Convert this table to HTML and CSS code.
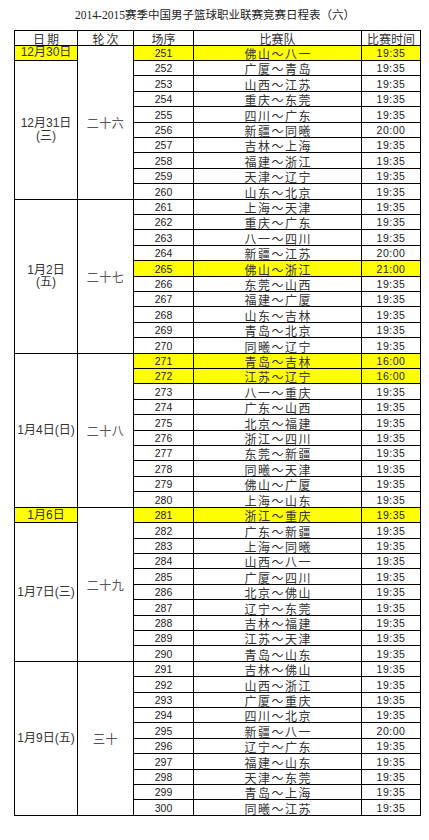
FILE: index.html
```html
<!DOCTYPE html>
<html lang="zh-CN">
<head>
<meta charset="utf-8">
<title>2014-2015赛季中国男子篮球职业联赛竞赛日程表（六）</title>
<link rel="stylesheet" href="styles.css">
</head>
<body>
<h1 class="title">2014-2015赛季中国男子篮球职业联赛竞赛日程表（六）</h1>
<table class="sched">
<colgroup><col class="c-date"><col class="c-round"><col class="c-no"><col class="c-team"><col class="c-time"></colgroup>
<thead>
<tr class="head"><th class="wide">日期</th><th class="wide">轮次</th><th>场序</th><th>比赛队</th><th>比赛时间</th></tr>
</thead>
<tbody>
<tr><td class="date hl">12月30日</td><td class="round" rowspan="10">二十六</td><td class="no hl">251</td><td class="team hl">佛山～八一</td><td class="time hl">19:35</td></tr>
<tr><td class="date" rowspan="9">12月31日<br>(三)</td><td class="no">252</td><td class="team">广厦～青岛</td><td class="time">19:35</td></tr>
<tr><td class="no">253</td><td class="team">山西～江苏</td><td class="time">19:35</td></tr>
<tr><td class="no">254</td><td class="team">重庆～东莞</td><td class="time">19:35</td></tr>
<tr><td class="no">255</td><td class="team">四川～广东</td><td class="time">19:35</td></tr>
<tr><td class="no">256</td><td class="team">新疆～同曦</td><td class="time">20:00</td></tr>
<tr><td class="no">257</td><td class="team">吉林～上海</td><td class="time">19:35</td></tr>
<tr><td class="no">258</td><td class="team">福建～浙江</td><td class="time">19:35</td></tr>
<tr><td class="no">259</td><td class="team">天津～辽宁</td><td class="time">19:35</td></tr>
<tr><td class="no">260</td><td class="team">山东～北京</td><td class="time">19:35</td></tr>

<tr><td class="date" rowspan="10">1月2日<br>(五)</td><td class="round" rowspan="10">二十七</td><td class="no">261</td><td class="team">上海～天津</td><td class="time">19:35</td></tr>
<tr><td class="no">262</td><td class="team">重庆～广东</td><td class="time">19:35</td></tr>
<tr><td class="no">263</td><td class="team">八一～四川</td><td class="time">19:35</td></tr>
<tr><td class="no">264</td><td class="team">新疆～江苏</td><td class="time">20:00</td></tr>
<tr><td class="no hl">265</td><td class="team hl">佛山～浙江</td><td class="time hl">21:00</td></tr>
<tr><td class="no">266</td><td class="team">东莞～山西</td><td class="time">19:35</td></tr>
<tr><td class="no">267</td><td class="team">福建～广厦</td><td class="time">19:35</td></tr>
<tr><td class="no">268</td><td class="team">山东～吉林</td><td class="time">19:35</td></tr>
<tr><td class="no">269</td><td class="team">青岛～北京</td><td class="time">19:35</td></tr>
<tr><td class="no">270</td><td class="team">同曦～辽宁</td><td class="time">19:35</td></tr>

<tr><td class="date" rowspan="10">1月4日(日)</td><td class="round" rowspan="10">二十八</td><td class="no hl">271</td><td class="team hl">青岛～吉林</td><td class="time hl">16:00</td></tr>
<tr><td class="no hl">272</td><td class="team hl">江苏～辽宁</td><td class="time hl">16:00</td></tr>
<tr><td class="no">273</td><td class="team">八一～重庆</td><td class="time">19:35</td></tr>
<tr><td class="no">274</td><td class="team">广东～山西</td><td class="time">19:35</td></tr>
<tr><td class="no">275</td><td class="team">北京～福建</td><td class="time">19:35</td></tr>
<tr><td class="no">276</td><td class="team">浙江～四川</td><td class="time">19:35</td></tr>
<tr><td class="no">277</td><td class="team">东莞～新疆</td><td class="time">19:35</td></tr>
<tr><td class="no">278</td><td class="team">同曦～天津</td><td class="time">19:35</td></tr>
<tr><td class="no">279</td><td class="team">佛山～广厦</td><td class="time">19:35</td></tr>
<tr><td class="no">280</td><td class="team">上海～山东</td><td class="time">19:35</td></tr>

<tr><td class="date hl">1月6日</td><td class="round" rowspan="10">二十九</td><td class="no hl">281</td><td class="team hl">浙江～重庆</td><td class="time hl">19:35</td></tr>
<tr><td class="date" rowspan="9">1月7日(三)</td><td class="no">282</td><td class="team">广东～新疆</td><td class="time">19:35</td></tr>
<tr><td class="no">283</td><td class="team">上海～同曦</td><td class="time">19:35</td></tr>
<tr><td class="no">284</td><td class="team">山西～八一</td><td class="time">19:35</td></tr>
<tr><td class="no">285</td><td class="team">广厦～四川</td><td class="time">19:35</td></tr>
<tr><td class="no">286</td><td class="team">北京～佛山</td><td class="time">19:35</td></tr>
<tr><td class="no">287</td><td class="team">辽宁～东莞</td><td class="time">19:35</td></tr>
<tr><td class="no">288</td><td class="team">吉林～福建</td><td class="time">19:35</td></tr>
<tr><td class="no">289</td><td class="team">江苏～天津</td><td class="time">19:35</td></tr>
<tr><td class="no">290</td><td class="team">青岛～山东</td><td class="time">19:35</td></tr>

<tr><td class="date" rowspan="10">1月9日(五)</td><td class="round" rowspan="10">三十</td><td class="no">291</td><td class="team">吉林～佛山</td><td class="time">19:35</td></tr>
<tr><td class="no">292</td><td class="team">山西～浙江</td><td class="time">19:35</td></tr>
<tr><td class="no">293</td><td class="team">广厦～重庆</td><td class="time">19:35</td></tr>
<tr><td class="no">294</td><td class="team">四川～北京</td><td class="time">19:35</td></tr>
<tr><td class="no">295</td><td class="team">新疆～八一</td><td class="time">20:00</td></tr>
<tr><td class="no">296</td><td class="team">辽宁～广东</td><td class="time">19:35</td></tr>
<tr><td class="no">297</td><td class="team">福建～山东</td><td class="time">19:35</td></tr>
<tr><td class="no">298</td><td class="team">天津～东莞</td><td class="time">19:35</td></tr>
<tr><td class="no">299</td><td class="team">青岛～上海</td><td class="time">19:35</td></tr>
<tr><td class="no">300</td><td class="team">同曦～江苏</td><td class="time">19:35</td></tr>
</tbody>
</table>
</body>
</html>
```

FILE: styles.css
```css
html, body {
  margin: 0;
  padding: 0;
  background: #ffffff;
}

body {
  font-family: "Liberation Sans", "Noto Sans CJK SC", sans-serif;
  color: #222;
}

.title {
  margin: 0;
  padding-top: 8px;
  padding-left: 1px;
  height: 29.5px;
  box-sizing: border-box;
  text-align: center;
  font-family: "Liberation Serif", "Noto Sans CJK SC", serif;
  font-size: 11.5px;
  line-height: 14px;
  font-weight: normal;
  color: #222;
}

.sched {
  margin-left: 14px;
  border-collapse: collapse;
  table-layout: fixed;
  width: 407px;
}

.c-date { width: 63px; }
.c-round { width: 56px; }
.c-no { width: 60px; }
.c-team { width: 168px; }
.c-time { width: 59px; }

.sched th,
.sched td {
  border: 1px solid #000;
  padding: 0;
  text-align: center;
  white-space: nowrap;
}

.head th {
  height: 14px;
  font-family: "Noto Sans CJK SC", sans-serif;
  font-weight: normal;
  font-size: 12px;
  line-height: 13px;
  vertical-align: bottom;
  color: #333;
}

.head th.wide {
  letter-spacing: 2px;
  padding-left: 2px;
}

.sched tbody tr {
  height: 15.42px;
}

.sched td {
  vertical-align: bottom;
  font-size: 12px;
  line-height: 13px;
}

.sched td.no {
  font-family: "Liberation Sans", sans-serif;
  font-size: 10.5px;
  color: #222;
}

.sched td.time {
  font-family: "Liberation Sans", sans-serif;
  font-size: 10.5px;
  letter-spacing: 0.5px;
  color: #222;
}

.sched td.team {
  font-family: "Noto Sans CJK SC", sans-serif;
  font-size: 12px;
  letter-spacing: 1.5px;
  padding-left: 1.5px;
  color: #333;
}

.sched td.date {
  vertical-align: middle;
  font-size: 12px;
  line-height: 12.5px;
  color: #333;
}

.sched td.round {
  vertical-align: middle;
  font-family: "Noto Sans CJK SC", sans-serif;
  font-size: 12px;
  letter-spacing: 0.5px;
  color: #555;
}

.sched td.hl {
  background: #ffff00;
}
```
